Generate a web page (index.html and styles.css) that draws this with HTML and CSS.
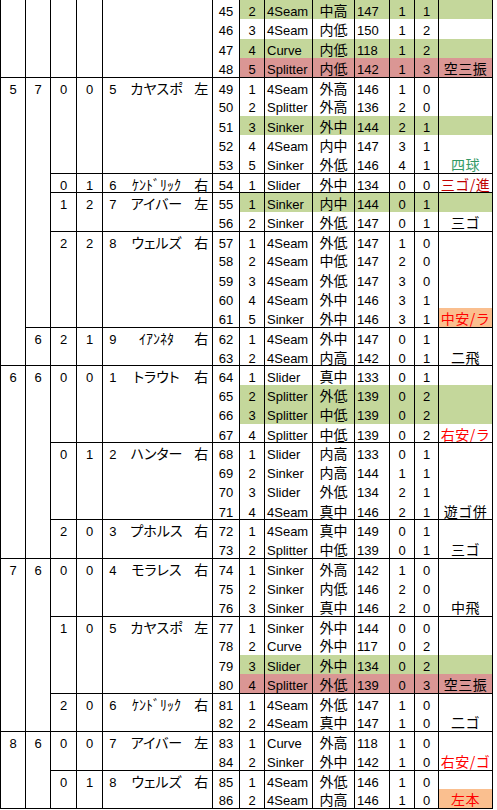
FILE: index.html
```html
<!DOCTYPE html>
<html lang="ja">
<head>
<meta charset="utf-8">
<title>Pitch log</title>
<link rel="stylesheet" href="styles.css">
</head>
<body>
<table class="log">
<colgroup>
<col class="w25"><col class="w25"><col class="w26"><col class="w26">
<col class="w20"><col class="w68"><col class="w22">
<col class="w27"><col class="w25"><col class="w48"><col class="w42"><col class="w35"><col class="w25"><col class="w24"><col class="w54">
</colgroup>
<tbody>
<tr class="g"><td rowspan="4"></td><td rowspan="4"></td><td rowspan="4"></td><td rowspan="4"></td><td rowspan="4" class="on"></td><td rowspan="4" class="jp nm"></td><td rowspan="4" class="jp hd"></td><td class="no">45</td><td>2</td><td class="ty">4Seam</td><td class="jp">中高</td><td class="sp">147</td><td>1</td><td>1</td><td class="jp rs"></td></tr>
<tr><td class="no">46</td><td>3</td><td class="ty">4Seam</td><td class="jp">内低</td><td class="sp">150</td><td>1</td><td>2</td><td class="jp rs"></td></tr>
<tr class="g"><td class="no">47</td><td>4</td><td class="ty">Curve</td><td class="jp">内低</td><td class="sp">118</td><td>1</td><td>2</td><td class="jp rs"></td></tr>
<tr class="r"><td class="no">48</td><td>5</td><td class="ty">Splitter</td><td class="jp">内低</td><td class="sp">142</td><td>1</td><td>3</td><td class="jp rs">空三振</td></tr>

<tr class="ab"><td rowspan="15">5</td><td rowspan="13">7</td><td rowspan="5">0</td><td rowspan="5">0</td><td rowspan="5" class="on">5</td><td rowspan="5" class="jp nm">カヤスポ</td><td rowspan="5" class="jp hd">左</td><td class="no">49</td><td>1</td><td class="ty">4Seam</td><td class="jp">外高</td><td class="sp">146</td><td>1</td><td>0</td><td class="jp rs"></td></tr>
<tr><td class="no">50</td><td>2</td><td class="ty">Splitter</td><td class="jp">外高</td><td class="sp">136</td><td>2</td><td>0</td><td class="jp rs"></td></tr>
<tr class="g"><td class="no">51</td><td>3</td><td class="ty">Sinker</td><td class="jp">外中</td><td class="sp">144</td><td>2</td><td>1</td><td class="jp rs"></td></tr>
<tr><td class="no">52</td><td>4</td><td class="ty">4Seam</td><td class="jp">内中</td><td class="sp">147</td><td>3</td><td>1</td><td class="jp rs"></td></tr>
<tr><td class="no">53</td><td>5</td><td class="ty">Sinker</td><td class="jp">外低</td><td class="sp">146</td><td>4</td><td>1</td><td class="jp rs c-green">四球</td></tr>

<tr class="ab"><td>0</td><td>1</td><td class="on">6</td><td class="jp nm">ｹﾝﾄﾞﾘｯｸ</td><td class="jp hd">右</td><td class="no">54</td><td>1</td><td class="ty">Slider</td><td class="jp">外中</td><td class="sp">134</td><td>0</td><td>0</td><td class="jp rs c-dark">三ゴ/進</td></tr>

<tr class="ab g"><td rowspan="2">1</td><td rowspan="2">2</td><td rowspan="2" class="on">7</td><td rowspan="2" class="jp nm">アイバー</td><td rowspan="2" class="jp hd">左</td><td class="no">55</td><td>1</td><td class="ty">Sinker</td><td class="jp">内中</td><td class="sp">144</td><td>0</td><td>1</td><td class="jp rs"></td></tr>
<tr><td class="no">56</td><td>2</td><td class="ty">Sinker</td><td class="jp">外低</td><td class="sp">147</td><td>0</td><td>1</td><td class="jp rs">三ゴ</td></tr>

<tr class="ab"><td rowspan="5">2</td><td rowspan="5">2</td><td rowspan="5" class="on">8</td><td rowspan="5" class="jp nm">ウェルズ</td><td rowspan="5" class="jp hd">右</td><td class="no">57</td><td>1</td><td class="ty">4Seam</td><td class="jp">外低</td><td class="sp">147</td><td>1</td><td>0</td><td class="jp rs"></td></tr>
<tr><td class="no">58</td><td>2</td><td class="ty">4Seam</td><td class="jp">中低</td><td class="sp">147</td><td>2</td><td>0</td><td class="jp rs"></td></tr>
<tr><td class="no">59</td><td>3</td><td class="ty">4Seam</td><td class="jp">外低</td><td class="sp">147</td><td>3</td><td>0</td><td class="jp rs"></td></tr>
<tr><td class="no">60</td><td>4</td><td class="ty">4Seam</td><td class="jp">外中</td><td class="sp">146</td><td>3</td><td>1</td><td class="jp rs"></td></tr>
<tr><td class="no">61</td><td>5</td><td class="ty">Sinker</td><td class="jp">外中</td><td class="sp">146</td><td>3</td><td>1</td><td class="jp rs c-red hit">中安/ラ</td></tr>

<tr class="ab"><td rowspan="2">6</td><td rowspan="2">2</td><td rowspan="2">1</td><td rowspan="2" class="on">9</td><td rowspan="2" class="jp nm">ｲｱﾝﾈﾀ</td><td rowspan="2" class="jp hd">右</td><td class="no">62</td><td>1</td><td class="ty">4Seam</td><td class="jp">外中</td><td class="sp">147</td><td>0</td><td>1</td><td class="jp rs"></td></tr>
<tr><td class="no">63</td><td>2</td><td class="ty">4Seam</td><td class="jp">内高</td><td class="sp">142</td><td>0</td><td>1</td><td class="jp rs">二飛</td></tr>

<tr class="ab"><td rowspan="10">6</td><td rowspan="10">6</td><td rowspan="4">0</td><td rowspan="4">0</td><td rowspan="4" class="on">1</td><td rowspan="4" class="jp nm">トラウト</td><td rowspan="4" class="jp hd">右</td><td class="no">64</td><td>1</td><td class="ty">Slider</td><td class="jp">真中</td><td class="sp">133</td><td>0</td><td>1</td><td class="jp rs"></td></tr>
<tr class="g"><td class="no">65</td><td>2</td><td class="ty">Splitter</td><td class="jp">外低</td><td class="sp">139</td><td>0</td><td>2</td><td class="jp rs"></td></tr>
<tr class="g"><td class="no">66</td><td>3</td><td class="ty">Splitter</td><td class="jp">中低</td><td class="sp">139</td><td>0</td><td>2</td><td class="jp rs"></td></tr>
<tr><td class="no">67</td><td>4</td><td class="ty">Splitter</td><td class="jp">中低</td><td class="sp">139</td><td>0</td><td>2</td><td class="jp rs c-red">右安/ラ</td></tr>

<tr class="ab"><td rowspan="4">0</td><td rowspan="4">1</td><td rowspan="4" class="on">2</td><td rowspan="4" class="jp nm">ハンター</td><td rowspan="4" class="jp hd">右</td><td class="no">68</td><td>1</td><td class="ty">Slider</td><td class="jp">内高</td><td class="sp">133</td><td>0</td><td>1</td><td class="jp rs"></td></tr>
<tr><td class="no">69</td><td>2</td><td class="ty">Sinker</td><td class="jp">内高</td><td class="sp">144</td><td>1</td><td>1</td><td class="jp rs"></td></tr>
<tr><td class="no">70</td><td>3</td><td class="ty">Slider</td><td class="jp">外低</td><td class="sp">134</td><td>2</td><td>1</td><td class="jp rs"></td></tr>
<tr><td class="no">71</td><td>4</td><td class="ty">4Seam</td><td class="jp">真中</td><td class="sp">146</td><td>2</td><td>1</td><td class="jp rs">遊ゴ併</td></tr>

<tr class="ab"><td rowspan="2">2</td><td rowspan="2">0</td><td rowspan="2" class="on">3</td><td rowspan="2" class="jp nm">プホルス</td><td rowspan="2" class="jp hd">右</td><td class="no">72</td><td>1</td><td class="ty">4Seam</td><td class="jp">真中</td><td class="sp">149</td><td>0</td><td>1</td><td class="jp rs"></td></tr>
<tr><td class="no">73</td><td>2</td><td class="ty">Splitter</td><td class="jp">中低</td><td class="sp">139</td><td>0</td><td>1</td><td class="jp rs">三ゴ</td></tr>

<tr class="ab"><td rowspan="9">7</td><td rowspan="9">6</td><td rowspan="3">0</td><td rowspan="3">0</td><td rowspan="3" class="on">4</td><td rowspan="3" class="jp nm">モラレス</td><td rowspan="3" class="jp hd">右</td><td class="no">74</td><td>1</td><td class="ty">Sinker</td><td class="jp">外高</td><td class="sp">142</td><td>1</td><td>0</td><td class="jp rs"></td></tr>
<tr><td class="no">75</td><td>2</td><td class="ty">Sinker</td><td class="jp">内低</td><td class="sp">146</td><td>2</td><td>0</td><td class="jp rs"></td></tr>
<tr><td class="no">76</td><td>3</td><td class="ty">Sinker</td><td class="jp">真中</td><td class="sp">146</td><td>2</td><td>0</td><td class="jp rs">中飛</td></tr>

<tr class="ab"><td rowspan="4">1</td><td rowspan="4">0</td><td rowspan="4" class="on">5</td><td rowspan="4" class="jp nm">カヤスポ</td><td rowspan="4" class="jp hd">左</td><td class="no">77</td><td>1</td><td class="ty">Sinker</td><td class="jp">外中</td><td class="sp">144</td><td>0</td><td>0</td><td class="jp rs"></td></tr>
<tr><td class="no">78</td><td>2</td><td class="ty">Curve</td><td class="jp">外中</td><td class="sp">117</td><td>0</td><td>2</td><td class="jp rs"></td></tr>
<tr class="g"><td class="no">79</td><td>3</td><td class="ty">Slider</td><td class="jp">外中</td><td class="sp">134</td><td>0</td><td>2</td><td class="jp rs"></td></tr>
<tr class="r"><td class="no">80</td><td>4</td><td class="ty">Splitter</td><td class="jp">外低</td><td class="sp">139</td><td>0</td><td>3</td><td class="jp rs">空三振</td></tr>

<tr class="ab"><td rowspan="2">2</td><td rowspan="2">0</td><td rowspan="2" class="on">6</td><td rowspan="2" class="jp nm">ｹﾝﾄﾞﾘｯｸ</td><td rowspan="2" class="jp hd">右</td><td class="no">81</td><td>1</td><td class="ty">4Seam</td><td class="jp">外低</td><td class="sp">147</td><td>1</td><td>0</td><td class="jp rs"></td></tr>
<tr><td class="no">82</td><td>2</td><td class="ty">4Seam</td><td class="jp">真中</td><td class="sp">147</td><td>1</td><td>0</td><td class="jp rs">二ゴ</td></tr>

<tr class="ab"><td rowspan="4">8</td><td rowspan="4">6</td><td rowspan="2">0</td><td rowspan="2">0</td><td rowspan="2" class="on">7</td><td rowspan="2" class="jp nm">アイバー</td><td rowspan="2" class="jp hd">左</td><td class="no">83</td><td>1</td><td class="ty">Curve</td><td class="jp">外高</td><td class="sp">118</td><td>1</td><td>0</td><td class="jp rs"></td></tr>
<tr><td class="no">84</td><td>2</td><td class="ty">Sinker</td><td class="jp">外中</td><td class="sp">142</td><td>1</td><td>0</td><td class="jp rs c-red">右安/ゴ</td></tr>

<tr class="ab"><td rowspan="2">0</td><td rowspan="2">1</td><td rowspan="2" class="on">8</td><td rowspan="2" class="jp nm">ウェルズ</td><td rowspan="2" class="jp hd">右</td><td class="no">85</td><td>1</td><td class="ty">4Seam</td><td class="jp">外低</td><td class="sp">146</td><td>1</td><td>0</td><td class="jp rs"></td></tr>
<tr><td class="no">86</td><td>2</td><td class="ty">4Seam</td><td class="jp">内高</td><td class="sp">146</td><td>1</td><td>0</td><td class="jp rs c-red hit">左本</td></tr>
</tbody>
</table>
</body>
</html>
```
FILE: styles.css
```css
html, body {
  margin: 0;
  padding: 0;
  background: #ffffff;
}

.log {
  border-collapse: collapse;
  table-layout: fixed;
  width: 493px;
  border-bottom: 1px solid #000;
  font-family: "Liberation Sans", "Noto Sans CJK JP", sans-serif;
  font-size: 13px;
  color: #000;
}

.w20 { width: 20px; }
.w22 { width: 22px; }
.w24 { width: 24px; }
.w25 { width: 25px; }
.w26 { width: 26px; }
.w27 { width: 27px; }
.w35 { width: 35px; }
.w42 { width: 42px; }
.w48 { width: 48px; }
.w54 { width: 54px; }
.w68 { width: 68px; }

.log tr {
  height: 19.25px;
}

.log td {
  padding: 6px 0 0 0;
  line-height: 12px;
  height: 12px;
  text-align: center;
  vertical-align: top;
  white-space: nowrap;
  overflow: hidden;
  border-left: 1px solid #000;
  border-right: 1px solid #000;
  border-top: none;
  border-bottom: none;
}

.log tr.ab td {
  border-top: 1px solid #000;
}

.log td.jp {
  font-family: "Noto Sans CJK JP", sans-serif;
  font-size: 14px;
  padding-top: 4px;
}

.log td.rs {
  letter-spacing: 0.5px;
}

.log td.on {
  border-right: hidden;
  text-align: center;
}

.log td.nm {
  border-left: hidden;
  border-right: hidden;
  font-feature-settings: "palt";
}

.log td.hd {
  border-left: hidden;
}

.log td.ty,
.log td.sp {
  text-align: left;
  padding-left: 2px;
}

.g .no ~ td { background: #c4d79b; }
.r .no ~ td { background: #da9694; }
.log td.hit { background: #fabf8f; }

.c-green { color: #339966; }
.c-dark { color: #c00000; }
.c-red { color: #ff0000; }
```
